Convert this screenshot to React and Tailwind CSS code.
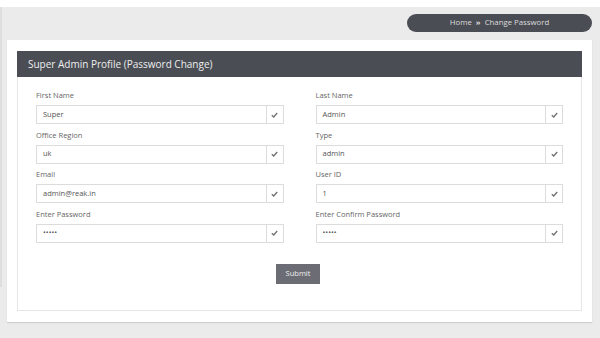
import React from 'react';

const fields = [
  ['First Name', 'Super', 'Last Name', 'Admin'],
  ['Office Region', 'uk', 'Type', 'admin'],
  ['Email', 'admin@reak.in', 'User ID', '1'],
  ['Enter Password', '•••••', 'Enter Confirm Password', '•••••'],
];

function Check() {
  return (
    <svg width="7" height="6" viewBox="0 0 7 6" fill="none">
      <path d="M0.8 3.2 L2.7 5 L6.2 1" stroke="#707070" strokeWidth="1.3" />
    </svg>
  );
}

function Field({ label, value }) {
  return (
    <div>
      <div className="h-[10px] text-[7.5px] leading-[10px] text-[#666]">{label}</div>
      <div className="mt-[5px] flex h-[19px] border border-[#dcdcdc] bg-white">
        <div className="flex flex-1 items-center pl-[6px] text-[7.5px] text-[#555]">{value}</div>
        <div className="flex w-[17px] items-center justify-center border-l border-[#dcdcdc]">
          <Check />
        </div>
      </div>
    </div>
  );
}

export default function App() {
  return (
    <div className="h-[338px] w-[600px] overflow-hidden bg-white pt-[7px] font-['Open_Sans',sans-serif]">
      <div className="flex h-[331px] bg-[#ebebeb]">
        <div className="h-[280px] w-[2px] bg-[#dedede]" />
        <div className="flex-1 pl-[5px] pr-[8px]">
          <div className="flex justify-end pt-[7px]">
            <div className="flex h-[18px] w-[185px] items-center justify-center gap-[4px] rounded-full bg-[#4b4d55] text-[7.8px] text-[#dcdcdc]">
              <span>Home</span>
              <span className="font-bold">»</span>
              <span>Change Password</span>
            </div>
          </div>
          <div className="mt-[8px] bg-white px-[10px] py-[11px] shadow-[0_1px_1px_rgba(0,0,0,0.12)]">
            <div className="flex h-[26px] items-center bg-[#4b4d55] px-[11px] text-[10px] text-[#ededed]">
              Super Admin Profile (Password Change)
            </div>
            <div className="border-x border-b border-[#e6e6e6] px-[18px] pb-[26px] pt-[13px]">
              <div className="grid grid-cols-2 gap-x-[32px] gap-y-[5.5px]">
                {fields.map(([l1, v1, l2, v2]) => (
                  <React.Fragment key={l1}>
                    <Field label={l1} value={v1} />
                    <Field label={l2} value={v2} />
                  </React.Fragment>
                ))}
              </div>
              <div className="mt-[21px] flex justify-center pr-[3px]">
                <button className="h-[20px] w-[44px] bg-[#6b6c74] text-[7.5px] text-[#f0f0f0]">Submit</button>
              </div>
            </div>
          </div>
        </div>
      </div>
    </div>
  );
}
